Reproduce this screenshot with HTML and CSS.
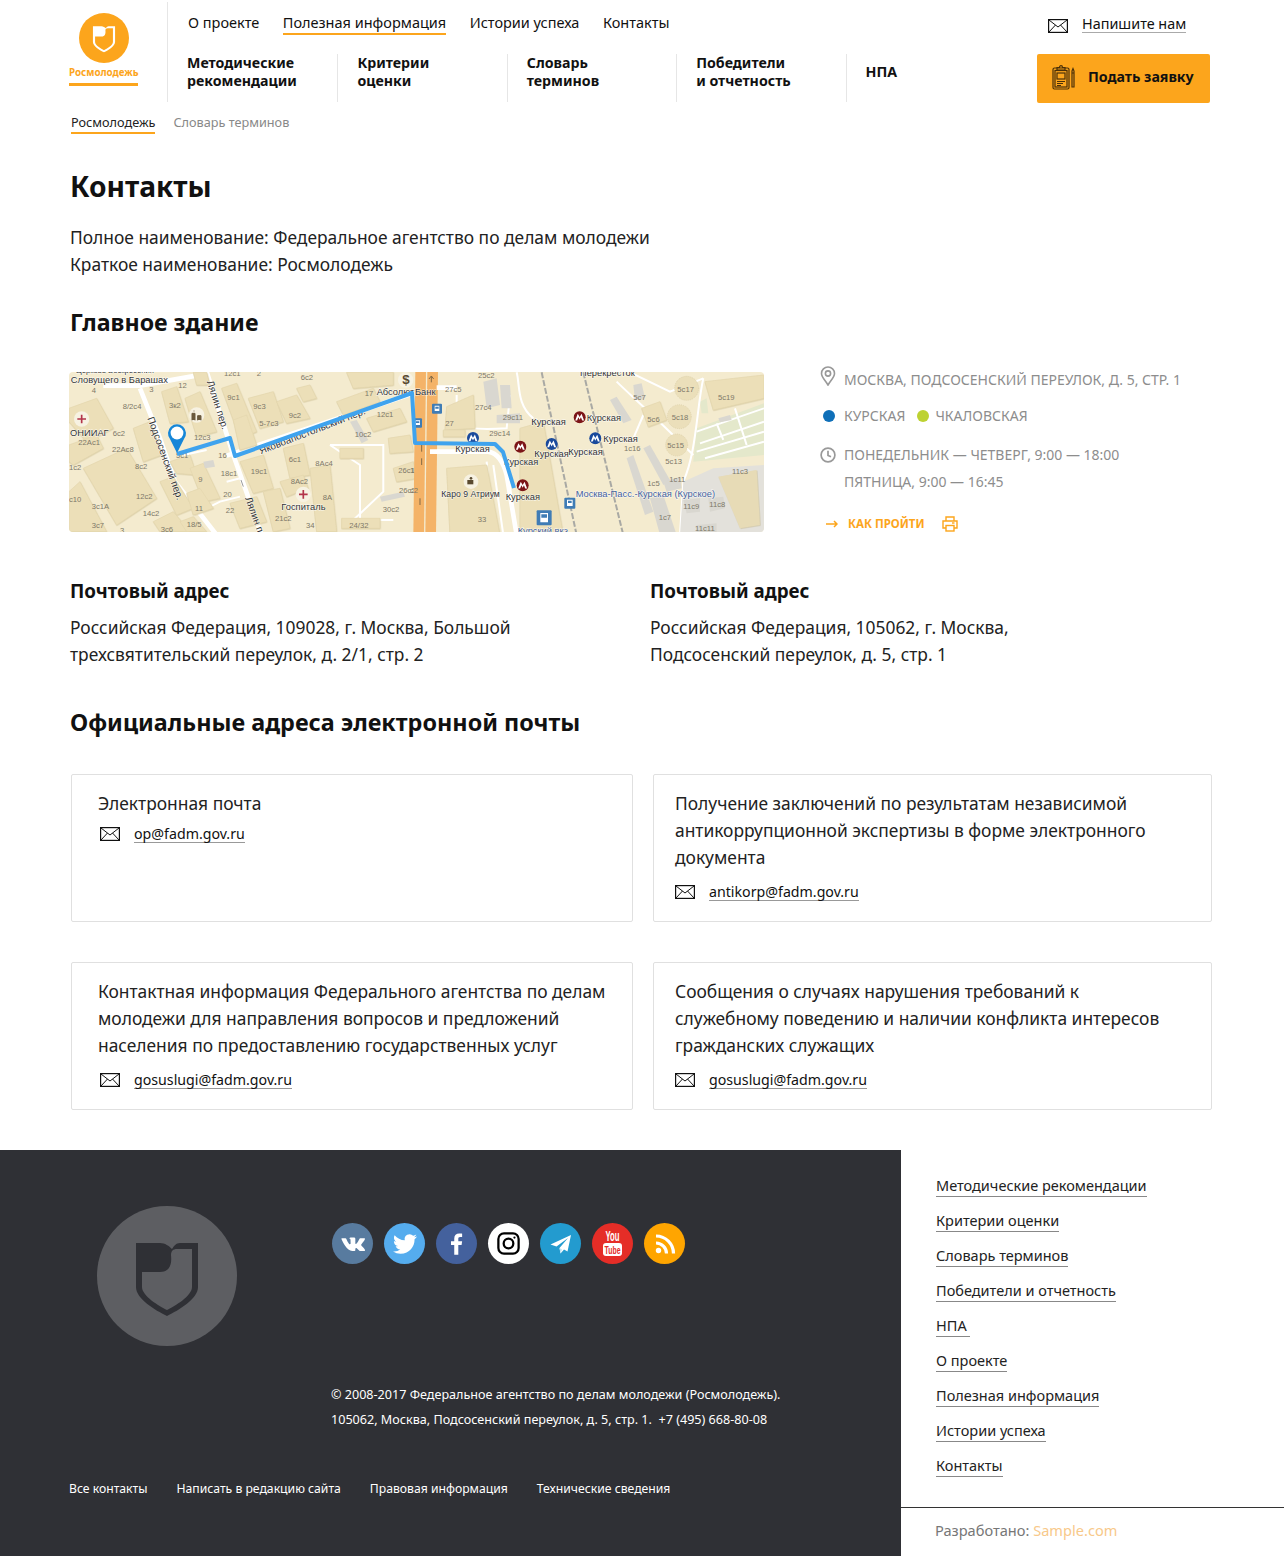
FILE: index.html
```html
<!DOCTYPE html>
<html lang="ru">
<head>
    <meta charset="UTF-8">
    <meta name="viewport" content="width=device-width, initial-scale=1.0">
    <title>Контакты</title>
    <link rel="stylesheet" href="styles.css">
</head>
<body>
    <svg class="defs">
        <symbol id="shield" viewBox="0 0 140 140">
            <path fill-rule="evenodd" d="M39 37H63C68 37 72 40 75 43C77 40 79 37 83 37H101V81C101 93 82 104 70 110C58 104 39 93 39 81ZM45 66V81C45 90 62 100 70 104C78 100 95 90 95 81V43H80C76 43 74 45 74 49C75 58 73 66 63 66Z"/>
        </symbol>
        <symbol id="envelope" viewBox="0 0 20 14">
            <rect x="0.6" y="0.6" width="18.8" height="12.8" fill="#fff" stroke="#111" stroke-width="1.2"/>
            <path d="M1 1L10 8L19 1M1 13L7.5 6M19 13L12.5 6" fill="none" stroke="#111" stroke-width="1"/>
        </symbol>
        <symbol id="metro" viewBox="0 0 40 40">
            <circle cx="20" cy="20" r="19"/>
            <path fill="#fff" d="M6 30L14 9L20 19L26 9L34 30H28L24 20L20 28L16 20L12 30Z"/>
        </symbol>
    </svg>

    <header class="header">
        <a class="logo">
            <span class="logo-circle"><svg class="logo-shield"><use href="#shield"/></svg></span>
            <span class="logo-name">Росмолодежь</span>
        </a>
        <div class="header-nav">
            <nav class="top-nav">
                <a>О проекте</a>
                <a class="active">Полезная информация</a>
                <a>Истории успеха</a>
                <a>Контакты</a>
            </nav>
            <nav class="main-nav">
                <a>Методические<br>рекомендации</a>
                <a>Критерии<br>оценки</a>
                <a>Словарь<br>терминов</a>
                <a>Победители<br>и отчетность</a>
                <a>НПА</a>
            </nav>
        </div>
        <div class="header-right">
            <div class="write-us">
                <svg class="envelope"><use href="#envelope"/></svg>
                <a>Напишите нам</a>
            </div>
            <a class="apply-btn">
                <svg class="clipboard" viewBox="0 0 24 26" fill="none" stroke="#4a3009" stroke-width="1.2">
                    <rect x="1" y="4" width="16" height="21" rx="1.5"/>
                    <rect x="3" y="6.5" width="12" height="16.5"/>
                    <path d="M5 6V3.5H7.5C7.5 1 10.5 1 10.5 3.5H13V6Z"/>
                    <rect x="5" y="9" width="8" height="6"/>
                    <path d="M5 17.5H13M5 19.5H11M5 21.5H9"/>
                    <path d="M20 7L21 4.5L22 7V23H20ZM20 9H22"/>
                </svg>
                <span>Подать заявку</span>
            </a>
        </div>
    </header>

    <div class="breadcrumbs">
        <a class="crumb-home">Росмолодежь</a>
        <span>Словарь терминов</span>
    </div>

    <main class="content">
        <h1>Контакты</h1>
        <p class="lead">Полное наименование: Федеральное агентство по делам молодежи<br>Краткое наименование: Росмолодежь</p>

        <h2>Главное здание</h2>
        <div class="building">
            <div class="map">
                <svg class="map-svg" viewBox="0 0 695 160">
                    <rect width="695" height="160" fill="#f4ebcf"/>

                    <g transform="translate(-9 -7) scale(0.3333)">
                        <g class="roads">
                            <path d="M130 62L240 62L430 28"/>
                            <path d="M240 70L300 220L345 350L470 510"/>
                            <path d="M440 20L520 270L605 510"/>
                            <path d="M500 272L1060 85"/>
                        </g>
                        <g class="roads-thin">
                            <path d="M810 240H970V380L880 465H1000"/>
                            <path d="M810 240L900 300V460"/>
                            <path d="M400 450L480 410L540 395"/>
                            <path d="M500 350L540 340"/>
                            <path d="M370 270L440 255"/>
                        </g>
                        <g class="blocks">
                            <polygon points="27,130 110,100 160,190 80,230 27,170"/>
                            <polygon points="27,240 110,210 130,250 40,300 27,290"/>
                            <polygon points="70,310 200,250 290,400 170,480"/>
                            <polygon points="27,380 60,350 140,500 27,500"/>
                            <polygon points="220,190 270,170 305,270 250,290"/>
                            <polygon points="305,80 350,65 385,170 330,175"/>
                            <polygon points="375,100 420,80 470,200 410,215"/>
                            <polygon points="330,290 390,270 410,330 350,325"/>
                            <polygon points="390,310 430,295 480,400 430,410"/>
                            <polygon points="300,350 340,335 400,430 350,450"/>
                            <polygon points="280,470 340,440 390,500 300,500"/>
                            <polygon points="380,385 420,370 460,430 400,450"/>
                            <polygon points="360,470 400,455 440,500 380,500"/>
                            <polygon points="485,70 530,55 590,200 540,220"/>
                            <polygon points="565,100 640,80 670,170 600,190"/>
                            <polygon points="520,165 560,150 590,240 540,255"/>
                            <polygon points="650,110 710,90 750,160 680,175"/>
                            <polygon points="710,70 750,60 770,100 730,110"/>
                            <polygon points="540,290 610,270 640,370 580,385"/>
                            <polygon points="670,250 730,235 750,330 690,340"/>
                            <polygon points="660,350 730,330 745,370 680,395"/>
                            <polygon points="750,310 810,300 830,500 770,500"/>
                            <polygon points="830,110 940,70 960,110 850,150"/>
                            <polygon points="920,160 1020,130 1040,170 940,200"/>
                            <polygon points="985,220 1050,210 1060,260 990,265"/>
                            <polygon points="840,250 910,250 910,280 840,280"/>
                            <polygon points="1000,310 1060,290 1070,340 1010,350"/>
                            <polygon points="845,460 960,460 960,490 845,490"/>
                            <polygon points="510,415 590,395 620,470 540,490"/>
                            <polygon points="610,380 660,370 690,490 640,500"/>
                            <polygon points="400,22 440,22 450,60 410,60"/>
                            <polygon points="860,22 1000,22 1000,60 880,70"/>
                        </g>
                        <polygon class="gray" points="430,290 460,285 465,305 435,310"/>
                        <polygon class="gray" points="960,395 1030,380 1035,395 965,410"/>
                        <polygon class="gray" points="870,170 890,165 925,225 905,235"/>
                        <path class="road-dark" d="M543 345L550 365"/>

                        <text x="32" y="55">Словущего в Барашах</text>
                        <text class="label-top" x="48" y="24">Церковь Воскресения</text>
                        <text class="num" x="95" y="84">4</text>
                        <text class="num" x="268" y="80">3</text>
                        <text class="num" x="355" y="68">12</text>
                        <text class="num" x="188" y="132">8/2с4</text>
                        <text class="num" x="327" y="128">3к2</text>
                        <text class="num" x="158" y="212">6с2</text>
                        <text class="num" x="55" y="241">22Ас1</text>
                        <text class="num" x="156" y="262">22Ас8</text>
                        <text class="num" x="225" y="312">8с2</text>
                        <text class="num" x="27" y="315">1с2</text>
                        <text class="num" x="27" y="410">с10</text>
                        <text class="num" x="95" y="432">3с1А</text>
                        <text class="num" x="228" y="402">12с2</text>
                        <text class="num" x="248" y="452">14с2</text>
                        <text class="num" x="95" y="490">3с7</text>
                        <text class="num" x="180" y="503">3</text>
                        <text class="num" x="302" y="502">3с6</text>
                        <text class="num" x="380" y="486">18/5</text>
                        <text class="num" x="405" y="437">11</text>
                        <text class="num" x="415" y="352">9</text>
                        <text class="num" x="402" y="225">12с3</text>
                        <text class="num" x="348" y="278">5с1</text>
                        <text class="num" x="475" y="280">16</text>
                        <text class="num" x="482" y="332">18с1</text>
                        <text class="num" x="490" y="395">20</text>
                        <text class="num" x="497" y="445">22</text>
                        <text class="num" x="572" y="327">19с1</text>
                        <text class="num" x="645" y="469">21с2</text>
                        <text class="num" x="738" y="490">34</text>
                        <text class="num" x="868" y="489">24/32</text>
                        <text class="num" x="502" y="105">9с1</text>
                        <text class="num" x="580" y="133">9с3</text>
                        <text class="num" x="598" y="184">5-7с3</text>
                        <text class="num" x="686" y="158">9с2</text>
                        <text class="num" x="492" y="33">12с1</text>
                        <text class="num" x="590" y="33">2</text>
                        <text class="num" x="722" y="44">6с2</text>
                        <text class="num" x="914" y="92">17</text>
                        <text class="num" x="950" y="156">12с1</text>
                        <text class="num" x="884" y="216">10с2</text>
                        <text class="num" x="686" y="291">6с1</text>
                        <text class="num" x="766" y="302">8Ас4</text>
                        <text class="num" x="692" y="358">8Ас2</text>
                        <text class="num" x="788" y="404">8А</text>
                        <text class="num" x="1015" y="325">26с1</text>
                        <text class="num" x="1017" y="385">26с2</text>
                        <text class="num" x="968" y="440">30с2</text>
                        <text x="30" y="212">ОНИИАГ</text>
                        <text x="664" y="436">Госпиталь</text>
                        <text x="950" y="91">Абсолют Б</text>
                        <text class="street" transform="translate(262 160) rotate(70)">Подсосенский пер.</text>
                        <text class="street" transform="translate(440 50) rotate(72)">Лялин пер.</text>
                        <text class="street" transform="translate(555 400) rotate(70)">Лялин п</text>
                        <text class="street" transform="translate(602 268) rotate(-21)">Яковоапостольский пер.</text>

                        <circle class="poi" cx="65" cy="162" r="23"/>
                        <path class="plus" d="M52 162H78M65 149V175"/>
                        <circle class="poi" cx="730" cy="388" r="23"/>
                        <path class="plus" d="M717 388H743M730 375V401"/>
                        <circle class="poi" cx="410" cy="150" r="23"/>
                        <path class="people" d="M396 165V145H405V165M402 138h.1M413 165V152H423V165"/>
                        <circle class="poi" cx="1037" cy="45" r="23"/>
                        <text class="dollar" x="1027" y="58">$</text>
                    </g>

                    <g transform="translate(341 -7) scale(0.3333)">
                        <path class="orange" d="M16 20L10 510H42L48 20Z"/>
                        <path class="orange" d="M52 20L46 510H78L84 20Z"/>
                        <g class="roads">
                            <path d="M60 260H235C265 265 280 290 290 330L320 510"/>
                            <path d="M80 68H140"/>
                        </g>
                        <polygon class="green" points="860,190 1062,115 1062,270 850,290"/>
                        <polygon class="green" points="870,110 890,100 895,145 875,145"/>
                        <g class="roads-thin">
                            <path d="M140 90V170C140 190 200 195 290 190L300 90"/>
                            <path d="M320 22C330 60 320 120 370 160"/>
                            <path d="M620 50C660 90 720 140 850 270"/>
                            <path d="M660 22L780 80L880 40"/>
                            <path d="M700 150L670 220"/>
                            <path d="M880 40C860 130 860 260 820 350L810 510"/>
                            <path d="M860 200L1062 130M860 260L1062 200M870 235L1062 170M885 280L1062 230"/>
                            <path d="M975 130L1010 240M920 175L940 225"/>
                            <path d="M250 300L280 510M230 290L250 510"/>
                        </g>
                        <g class="blocks">
                            <polygon points="110,125 190,90 195,190 105,195"/>
                            <polygon points="100,195 165,195 165,215 100,215"/>
                            <polygon points="110,310 230,300 270,510 120,510"/>
                            <polygon points="330,190 400,170 460,510 330,510"/>
                            <polygon points="695,130 750,110 770,165 715,185"/>
                            <polygon points="885,50 1062,30 1062,100 910,135"/>
                        </g>
                        <g class="tanks">
                            <circle cx="830" cy="70" r="36"/>
                            <circle cx="808" cy="155" r="36"/>
                            <circle cx="800" cy="240" r="33"/>
                        </g>
                        <polygon class="lot" points="810,510 820,350 910,310 1062,300 1062,510"/>
                        <polygon class="tan-building" points="925,335 1040,315 1050,480 990,490"/>
                        <g class="grays">
                            <polygon points="220,50 260,40 270,120 230,130"/>
                            <polygon points="270,60 300,60 305,130 275,130"/>
                            <polygon points="260,150 330,145 330,175 260,175"/>
                            <polygon points="600,105 620,95 665,165 640,175"/>
                            <polygon points="650,280 670,270 730,440 705,450"/>
                            <polygon points="700,250 720,240 780,345 760,360"/>
                            <polygon points="670,60 695,55 705,100 675,105"/>
                            <polygon points="925,160 960,150 965,165 930,172"/>
                            <polygon points="760,350 810,335 815,370 770,380"/>
                            <polygon points="820,405 870,400 870,440 830,445"/>
                            <polygon points="895,400 940,395 945,430 900,440"/>
                            <polygon points="860,480 920,475 920,510 860,510"/>
                            <polygon points="720,400 760,390 800,510 750,510"/>
                        </g>
                        <path class="rail" d="M395 22L500 510"/>
                        <path class="rail" d="M520 22L640 510"/>

                        <text class="num" x="105" y="80">27с5</text>
                        <text class="num" x="204" y="40">25с2</text>
                        <text class="num" x="195" y="135">27с4</text>
                        <text class="num" x="106" y="184">27</text>
                        <text class="num" x="278" y="164">29с11</text>
                        <text class="num" x="238" y="214">29с14</text>
                        <text class="num" x="0" y="325">1</text>
                        <text class="num" x="0" y="385">с2</text>
                        <text class="num" x="203" y="470">33</text>
                        <text class="num" x="670" y="105">5с7</text>
                        <text class="num" x="712" y="170">5с6</text>
                        <text class="num" x="802" y="80">5с17</text>
                        <text class="num" x="924" y="106">5с19</text>
                        <text class="num" x="785" y="164">5с18</text>
                        <text class="num" x="772" y="248">5с15</text>
                        <text class="num" x="766" y="296">5с13</text>
                        <text class="num" x="642" y="258">1с16</text>
                        <text class="num" x="712" y="364">1с5</text>
                        <text class="num" x="778" y="352">1с11</text>
                        <text class="num" x="746" y="466">1с7</text>
                        <text class="num" x="966" y="327">11с3</text>
                        <text class="num" x="820" y="432">11с9</text>
                        <text class="num" x="898" y="426">11с8</text>
                        <text class="num" x="855" y="498">11с11</text>
                        <text x="15" y="90">Банк</text>
                        <text x="510" y="34">Перекресток</text>
                        <text x="364" y="179">Курская</text>
                        <text x="530" y="167">Курская</text>
                        <text x="580" y="230">Курская</text>
                        <text x="136" y="261">Курская</text>
                        <text x="373" y="277">Курская</text>
                        <text x="475" y="270">Курская</text>
                        <text x="282" y="299">Курская</text>
                        <text x="287" y="405">Курская</text>
                        <text class="small" x="94" y="397">Каро 9 Атриум</text>
                        <text class="station" x="497" y="396">Москва-Пасс.-Курская (Курское)</text>
                        <text class="station" x="323" y="508">Курский вкз</text>

                        <use class="metro-red" href="#metro" x="490" y="138" width="38" height="38"/>
                        <use class="metro-red" href="#metro" x="312" y="226" width="38" height="38"/>
                        <use class="metro-red" href="#metro" x="319" y="342" width="38" height="38"/>
                        <use class="metro-blue" href="#metro" x="170" y="200" width="38" height="38"/>
                        <use class="metro-blue" href="#metro" x="406" y="218" width="38" height="38"/>
                        <use class="metro-blue" href="#metro" x="537" y="201" width="38" height="38"/>

                        <rect class="transit" x="66" y="116" width="30" height="30" rx="3"/>
                        <rect class="transit" x="10" y="160" width="26" height="28" rx="3"/>
                        <rect class="transit" x="463" y="398" width="33" height="33" rx="3"/>
                        <rect class="transit" x="380" y="436" width="45" height="45" rx="3"/>
                        <path class="transit-mark" d="M74 122H88V138H74ZM16 166H30V180H16ZM471 404H488V423H471ZM391 444H414V472H391Z"/>
                        <path class="transit-window" d="M76 125H86V131H76ZM18 169H28V174H18ZM474 407H485V414H474ZM394 448H411V458H394Z"/>
                        <path class="arrow-mark" d="M64 52V35M57 42L64 33L71 42M35 240V260M35 280V300M30 400V420"/>
                        <circle class="poi" cx="183" cy="350" r="22"/>
                        <rect class="cam" x="172" y="345" width="18" height="13"/>
                        <circle class="cam" cx="183" cy="340" r="4"/>
                    </g>

                    <polyline class="route" points="108,82 161,66 166,84 343,21 346,71 426,72 434,80 445,116"/>
                    <path class="pin" d="M108 81L101 67A9 9 0 1 1 115 67Z"/>
                    <circle class="pin-hole" cx="108" cy="61" r="6.4"/>
                </svg>
            </div>
            <div class="building-info">
                <div class="info-row">
                    <svg class="info-icon" viewBox="0 0 16 20" fill="none" stroke="#999" stroke-width="1.6">
                        <path d="M8 19C5 14 1.5 11 1.5 7.5A6.5 6.5 0 0 1 14.5 7.5C14.5 11 11 14 8 19Z"/>
                        <circle cx="8" cy="7.5" r="2.6"/>
                    </svg>
                    <span>МОСКВА, ПОДСОСЕНСКИЙ ПЕРЕУЛОК, Д. 5, СТР. 1</span>
                </div>
                <div class="info-row metro-row">
                    <span class="dot dot-blue"></span>
                    <span>КУРСКАЯ</span>
                    <span class="dot dot-green"></span>
                    <span>ЧКАЛОВСКАЯ</span>
                </div>
                <div class="info-row hours-row">
                    <svg class="info-icon" viewBox="0 0 16 16" fill="none" stroke="#999" stroke-width="1.7">
                        <circle cx="8" cy="8" r="6.9"/>
                        <path d="M8 3.8V8.4L11 9.8"/>
                    </svg>
                    <span>ПОНЕДЕЛЬНИК — ЧЕТВЕРГ, 9:00 — 18:00<br>ПЯТНИЦА, 9:00 — 16:45</span>
                </div>
                <div class="route-row">
                    <svg class="route-arrow" viewBox="0 0 12 8" fill="none" stroke="#fca51c" stroke-width="1.5">
                        <path d="M0 4H11M8 1L11 4L8 7"/>
                    </svg>
                    <a>КАК ПРОЙТИ</a>
                    <svg class="printer" viewBox="0 0 16 16" fill="none" stroke="#fca51c" stroke-width="1.4">
                        <path d="M4 5V1H12V5M4 12H1V5H15V12H12"/>
                        <rect x="4" y="9.5" width="8" height="5.5"/>
                        <path d="M10 7H12.5"/>
                    </svg>
                </div>
            </div>
        </div>

        <div class="addresses">
            <div>
                <h3>Почтовый адрес</h3>
                <p class="lead">Российская Федерация, 109028, г. Москва, Большой<br>трехсвятительский переулок, д. 2/1, стр. 2</p>
            </div>
            <div>
                <h3>Почтовый адрес</h3>
                <p class="lead">Российская Федерация, 105062, г. Москва,<br>Подсосенский переулок, д. 5, стр. 1</p>
            </div>
        </div>

        <h2 class="mail-title">Официальные адреса электронной почты</h2>
        <div class="cards">
            <div class="card card-left">
                <p>Электронная почта</p>
                <div class="mail mail-near"><svg class="envelope"><use href="#envelope"/></svg><a>op@fadm.gov.ru</a></div>
            </div>
            <div class="card">
                <p>Получение заключений по результатам независимой<br>антикоррупционной экспертизы в форме электронного<br>документа</p>
                <div class="mail"><svg class="envelope"><use href="#envelope"/></svg><a>antikorp@fadm.gov.ru</a></div>
            </div>
            <div class="card card-left">
                <p>Контактная информация Федерального агентства по делам<br>молодежи для направления вопросов и предложений<br>населения по предоставлению государственных услуг</p>
                <div class="mail"><svg class="envelope"><use href="#envelope"/></svg><a>gosuslugi@fadm.gov.ru</a></div>
            </div>
            <div class="card">
                <p>Сообщения о случаях нарушения требований к<br>служебному поведению и наличии конфликта интересов<br>гражданских служащих</p>
                <div class="mail"><svg class="envelope"><use href="#envelope"/></svg><a>gosuslugi@fadm.gov.ru</a></div>
            </div>
        </div>
    </main>

    <footer class="footer">
        <div class="footer-left">
            <div class="footer-top">
                <div class="footer-logo"><svg class="footer-shield"><use href="#shield"/></svg></div>
                <div class="socials">
                    <a class="social vk"><svg viewBox="0 0 24 24"><path fill="#fff" d="M21.5 7h-3.3c-.3 0-.5.2-.6.4 0 0-1.3 2.400-1.700 3.200C14.700 12.800 14 12.100 14 11.100V7.600c0-.6-.5-1.100-1.100-1.100h-2.500c-.7 0-1.400.3-1.700.8 0 0 1.200-.2 1.200 1.500 0 .4 0 1.600.1 2.600 0 .7-.8 1-1.300.5-1-1.400-1.900-2.900-2.500-4.500-.1-.2-.3-.4-.6-.4h-3c-.3 0-.6.400-.5.700C3 10.200 6.900 18 11.400 18h1.900c.4 0 .7-.3.7-.7v-1.200c0-.6.8-1 1.200-.5l2.300 2.100c.2.200.5.300.7.300h3c1.400 0 1.400-1 .6-1.800-.5-.5-2.500-2.600-2.500-2.600-.4-.4-.4-.9-.1-1.300.6-.8 1.700-2.200 2.100-2.800.6-.8 1.700-2.500.2-2.500z"/></svg></a>
                    <a class="social tw"><svg viewBox="0 0 24 24"><path fill="#fff" d="M23.950 4.570a10 10 0 01-2.820.78 4.960 4.960 0 002.160-2.730c-.95.560-2 .96-3.130 1.190a4.920 4.920 0 00-8.380 4.480C7.690 8.100 4.070 6.130 1.640 3.160a4.820 4.820 0 00-.67 2.480c0 1.710.87 3.210 2.190 4.090a4.900 4.900 0 01-2.230-.61v.06a4.920 4.920 0 003.950 4.830 5 5 0 01-2.210.08 4.940 4.940 0 004.600 3.420 9.870 9.870 0 01-6.100 2.100c-.39 0-.78-.02-1.170-.06a14 14 0 007.560 2.210c9.050 0 14-7.500 14-13.990 0-.21 0-.42-.02-.63A9.940 9.940 0 0024 4.590z"/></svg></a>
                    <a class="social fb"><svg viewBox="0 0 24 24"><path fill="#fff" d="M13.600 22V13.300H16.500L17 10H13.600V7.900C13.600 7 13.900 6.300 15.200 6.300H17V3.300C16.700 3.300 15.600 3.200 14.400 3.200C11.800 3.200 10 4.800 10 7.600V10H7.100V13.300H10V22Z"/></svg></a>
                    <a class="social ig"><svg viewBox="0 0 24 24" fill="none" stroke="#000" stroke-width="2"><rect x="3" y="3" width="18" height="18" rx="5"/><circle cx="12" cy="12" r="4.300"/><circle cx="17.300" cy="6.700" r="1" fill="#000" stroke="none"/></svg></a>
                    <a class="social tg"><svg viewBox="0 0 24 24"><path fill="#fff" d="M22 3L1.500 12.500L7.500 14.500L19 6L10.500 16L11.500 21.500L15 17.500L18.500 19.500Z"/><path fill="#bfe3f3" d="M10.500 16L11.500 21.500L13 17.500Z"/></svg></a>
                    <a class="social yt"><svg viewBox="0 0 41 41">
                        <text class="yt-you" x="20.500" y="18" text-anchor="middle" textLength="14" lengthAdjust="spacingAndGlyphs">You</text>
                        <rect x="11" y="20" width="19" height="13" rx="3" fill="#fff"/>
                        <text class="yt-tube" x="20.500" y="31" text-anchor="middle" textLength="16" lengthAdjust="spacingAndGlyphs">Tube</text>
                    </svg></a>
                    <a class="social rss"><svg viewBox="0 0 24 24" fill="none" stroke="#fff" stroke-width="3.200"><circle cx="5.500" cy="18.500" r="2.700" fill="#fff" stroke="none"/><path d="M3 11A10.500 10.500 0 0 1 13.500 21.500M3 4A17.500 17.500 0 0 1 20.500 21.500"/></svg></a>
                </div>
            </div>
            <p class="copyright">© 2008-2017 Федеральное агентство по делам молодежи (Росмолодежь).<br>105062, Москва, Подсосенский переулок, д. 5, стр. 1.&nbsp; +7 (495) 668-80-08</p>
            <nav class="footer-links">
                <a>Все контакты</a>
                <a>Написать в редакцию сайта</a>
                <a>Правовая информация</a>
                <a>Технические сведения</a>
            </nav>
        </div>
        <div class="footer-right">
            <ul class="footer-menu">
                <li><a>Методические рекомендации</a></li>
                <li><a>Критерии оценки</a></li>
                <li><a>Словарь терминов</a></li>
                <li><a>Победители и отчетность</a></li>
                <li><a>НПА&nbsp;</a></li>
                <li><a>О проекте</a></li>
                <li><a>Полезная информация</a></li>
                <li><a>Истории успеха</a></li>
                <li><a>Контакты</a></li>
            </ul>
            <div class="developer">Разработано: <a>Sample.com</a></div>
        </div>
    </footer>
</body>
</html>
```

FILE: styles.css
```css
body {
    font-family: "Noto Sans", Arial, sans-serif;
    color: #111;
    background-color: #fff;
    margin: 0;
}
a {
    color: inherit;
}
.defs {
    display: none;
}

/* header */
.header {
    display: flex;
    height: 104px;
    padding-left: 69px;
}
.logo {
    width: 98px;
    height: 100px;
    margin-top: 2px;
    border-right: 1px solid #e6e6e6;
}
.logo-circle {
    display: block;
    width: 50px;
    height: 50px;
    margin: 11px 0 0 10px;
    border-radius: 50%;
    background-color: #fca51c;
}
.logo-shield {
    display: block;
    width: 50px;
    height: 50px;
    fill: #fff;
}
.logo-name {
    display: block;
    width: 69px;
    margin-top: 4px;
    padding-bottom: 4px;
    border-bottom: 3px solid #fca51c;
    color: #fca51c;
    font-size: 9.8px;
    font-weight: 700;
    line-height: 12px;
    white-space: nowrap;
}
.header-nav {
    width: 869px;
}
.top-nav {
    display: flex;
    gap: 23.5px;
    height: 54px;
    padding-left: 20px;
    box-sizing: border-box;
    font-size: 14.5px;
    line-height: 20px;
}
.top-nav a {
    align-self: flex-start;
    margin-top: 12px;
}
.top-nav .active {
    padding-bottom: 1px;
    border-bottom: 2px solid #fca51c;
}
.main-nav {
    display: flex;
    height: 48px;
    font-size: 14.2px;
    font-weight: 700;
    line-height: 18px;
}
.main-nav a {
    display: flex;
    align-items: center;
    width: 169.4px;
    box-sizing: border-box;
    padding: 0 0 12px 19px;
    border-left: 1px solid #e6e6e6;
}
.main-nav a:first-child {
    border-left: none;
}
.write-us {
    display: flex;
    align-items: center;
    height: 54px;
    padding: 0 0 6px 11px;
    box-sizing: border-box;
    font-size: 14.4px;
}
.write-us a {
    margin-left: 14px;
    border-bottom: 1px solid #aaa;
    line-height: 17px;
}
.write-us .envelope {
    margin-top: 4px;
}
.envelope {
    width: 20px;
    height: 14px;
    flex-shrink: 0;
}
.apply-btn {
    display: flex;
    align-items: center;
    width: 173px;
    height: 49px;
    padding: 0 0 4px 15px;
    box-sizing: border-box;
    border-radius: 2px;
    background-color: #fca51c;
    font-size: 14.2px;
    font-weight: 700;
}
.clipboard {
    width: 24px;
    height: 26px;
    margin-right: 12px;
}

/* breadcrumbs */
.breadcrumbs {
    display: flex;
    gap: 18px;
    height: 38px;
    padding: 9px 0 0 71px;
    box-sizing: border-box;
    color: #888;
    font-size: 12.7px;
    line-height: 18px;
}
.crumb-home {
    align-self: flex-start;
    padding-bottom: 1px;
    border-bottom: 2px solid #fca51c;
    color: #222;
}

/* content */
.content {
    padding: 0 72px 0 70px;
}
h1 {
    margin: 26px 0 20px;
    font-size: 28.2px;
    line-height: 36px;
}
h2 {
    margin: 29px 0 35px;
    font-size: 23.2px;
    line-height: 30px;
}
h3 {
    margin: 0 0 10px;
    font-size: 18.8px;
    line-height: 26px;
}
.lead {
    margin: 0;
    color: #222;
    font-size: 17.4px;
    line-height: 27px;
}
.building {
    display: flex;
    height: 160px;
    margin-left: -1px;
}
.map {
    width: 695px;
    height: 160px;
    border-radius: 4px;
    overflow: hidden;
}
.map-svg {
    display: block;
    width: 695px;
    height: 160px;
}
.map-svg text {
    fill: #333;
    stroke: #fff;
    stroke-width: 3px;
    stroke-opacity: 0.8;
    paint-order: stroke;
    font-family: "Liberation Sans", Arial, sans-serif;
    font-size: 28px;
}
.map-svg .num {
    fill: #7d7868;
    stroke: none;
    font-size: 23px;
}
.map-svg .street {
    font-size: 30px;
}
.map-svg .small {
    font-size: 26px;
}
.map-svg .label-top {
    font-size: 23px;
}
.map-svg .station {
    fill: #43609a;
    font-size: 28px;
}
.map-svg .dollar {
    fill: #5a4a30;
    stroke: none;
    font-size: 40px;
    font-weight: 700;
}
.roads {
    fill: none;
    stroke: #fff;
    stroke-width: 14;
}
.roads-thin {
    fill: none;
    stroke: #fff;
    stroke-width: 6;
}
.road-dark {
    stroke: #666;
    stroke-width: 2;
}
.blocks {
    fill: #ecdfb8;
    stroke: #e4d7ae;
    stroke-width: 2;
    filter: drop-shadow(1px 2px 0 #d9cda6);
}
.green {
    fill: #e4e8cb;
}
.gray,
.grays {
    fill: #d9d7d0;
}
.lot {
    fill: #e3e1db;
}
.tan-building {
    fill: #e7dbb6;
    filter: drop-shadow(2px 2px 0 #cfc6a8);
}
.tanks {
    fill: #ebdfba;
    stroke: #d9cda6;
    stroke-width: 2;
    stroke-dasharray: 3 3;
}
.orange {
    fill: #f4b368;
}
.rail {
    fill: none;
    stroke: #a9a9a4;
    stroke-width: 6;
    stroke-dasharray: 18 6;
}
.poi {
    fill: #f7f2e2;
}
.plus {
    fill: none;
    stroke: #b3344a;
    stroke-width: 5;
}
.people {
    fill: #6b5a3e;
    stroke: #6b5a3e;
    stroke-width: 3;
    stroke-linecap: round;
}
.cam {
    fill: #5a4a30;
}
.metro-red {
    fill: #7c1518;
}
.metro-blue {
    fill: #1a4a9c;
}
.transit {
    fill: #3f7cb5;
}
.transit-mark {
    fill: #fff;
}
.transit-window {
    fill: #3f7cb5;
}
.arrow-mark {
    fill: none;
    stroke: #6b5a3e;
    stroke-width: 2.5;
}
.route {
    fill: none;
    stroke: #3fa3ee;
    stroke-width: 4;
    stroke-linejoin: round;
}
.pin {
    fill: #1586d8;
}
.pin-hole {
    fill: #fff;
}
.building-info {
    margin-top: -6px;
    padding-left: 56px;
    color: #8d8d8d;
    font-size: 14px;
    line-height: 27px;
}
.info-row {
    display: flex;
    align-items: flex-start;
    white-space: nowrap;
}
.info-icon {
    width: 16px;
    height: 20px;
    margin: 0 8px 0 0;
    flex-shrink: 0;
}
.metro-row {
    align-items: center;
    margin-top: 9px;
}
.dot {
    width: 12px;
    height: 12px;
    margin-left: 3px;
    margin-right: 9px;
    border-radius: 50%;
}
.dot-blue {
    background-color: #0f6fb8;
}
.dot-green {
    margin-left: 12px;
    margin-right: 6px;
    background-color: #bdd232;
}
.hours-row {
    margin-top: 12px;
}
.hours-row .info-icon {
    margin-top: 4px;
}
.route-row {
    display: flex;
    align-items: center;
    margin-top: 15px;
    padding-left: 6px;
    color: #fca51c;
    font-size: 11.5px;
    font-weight: 700;
}
.route-arrow {
    width: 12px;
    height: 8px;
    margin-right: 10px;
}
.printer {
    width: 16px;
    height: 16px;
    margin-left: 17px;
}
.addresses {
    display: grid;
    grid-template-columns: 580px 1fr;
    margin-top: 46px;
}
h2.mail-title {
    margin: 39px 0 37px;
    font-size: 23.4px;
}

/* cards */
.cards {
    display: grid;
    grid-template-columns: 562px 559px;
    gap: 40px 20px;
    margin-left: 1px;
}
.card {
    height: 148px;
    padding: 15px 20px 0 21px;
    box-sizing: border-box;
    border: 1px solid #e0e0e0;
    border-radius: 2px;
}
.card-left {
    padding-left: 26px;
}
.card p {
    margin: 0;
    color: #222;
    font-size: 17.4px;
    line-height: 27px;
    white-space: nowrap;
}
.mail {
    display: flex;
    align-items: center;
    margin-top: 12px;
    font-size: 14.2px;
    line-height: 20px;
}
.mail-near {
    margin-top: 8px;
}
.card-left .mail {
    padding-left: 2px;
}
.mail a {
    margin-left: 14px;
    border-bottom: 1px solid #999;
    line-height: 17px;
}

/* footer */
.footer {
    display: flex;
    height: 406px;
    margin-top: 40px;
}
.footer-left {
    width: 901px;
    padding-top: 56px;
    box-sizing: border-box;
    background-color: #2f3035;
    color: #fff;
}
.footer-top {
    display: flex;
    height: 176px;
    padding-left: 97px;
}
.footer-logo {
    width: 140px;
    height: 140px;
    border-radius: 50%;
    background-color: #5d5e62;
}
.footer-shield {
    display: block;
    width: 140px;
    height: 140px;
    fill: #2f3035;
}
.socials {
    display: flex;
    gap: 11px;
    margin: 17px 0 0 95px;
}
.social {
    display: flex;
    align-items: center;
    justify-content: center;
    width: 41px;
    height: 41px;
    border-radius: 50%;
}
.social svg {
    width: 24px;
    height: 24px;
}
.vk {
    background-color: #587b9f;
}
.social.vk svg {
    width: 28px;
    height: 28px;
}
.tw {
    background-color: #55acee;
}
.fb {
    background-color: #44619d;
}
.social.fb svg {
    width: 27px;
    height: 27px;
}
.ig {
    background-color: #fff;
}
.social.ig svg {
    width: 27px;
    height: 27px;
}
.tg {
    background-color: #239bcf;
}
.yt {
    background-color: #e52d27;
}
.social.yt svg {
    width: 41px;
    height: 41px;
}
.rss {
    background-color: #ffa500;
}
.yt-you {
    fill: #fff;
    font-family: "Liberation Sans", Arial, sans-serif;
    font-size: 14px;
    font-weight: 700;
}
.yt-tube {
    fill: #e52d27;
    font-family: "Liberation Sans", Arial, sans-serif;
    font-size: 11.5px;
    font-weight: 700;
}
.copyright {
    margin: 0 0 0 331px;
    font-size: 12.6px;
    line-height: 25px;
    white-space: nowrap;
}
.footer-links {
    display: flex;
    gap: 29px;
    margin: 47px 0 0 69px;
    font-size: 12.2px;
    line-height: 20px;
}
.footer-right {
    display: flex;
    flex: 1;
    flex-direction: column;
    justify-content: space-between;
}
.footer-menu {
    margin: 0;
    padding: 18px 0 0 35px;
    list-style-type: none;
    font-size: 14.5px;
}
.footer-menu li {
    height: 35px;
    line-height: 35px;
}
.footer-menu a {
    padding-bottom: 1px;
    border-bottom: 1px solid #888;
    color: #222;
}
.developer {
    height: 49px;
    padding-left: 34px;
    box-sizing: border-box;
    border-top: 1px solid #333;
    color: #777;
    font-size: 14.6px;
    line-height: 45px;
}
.developer a {
    color: #f8c98a;
}
```
